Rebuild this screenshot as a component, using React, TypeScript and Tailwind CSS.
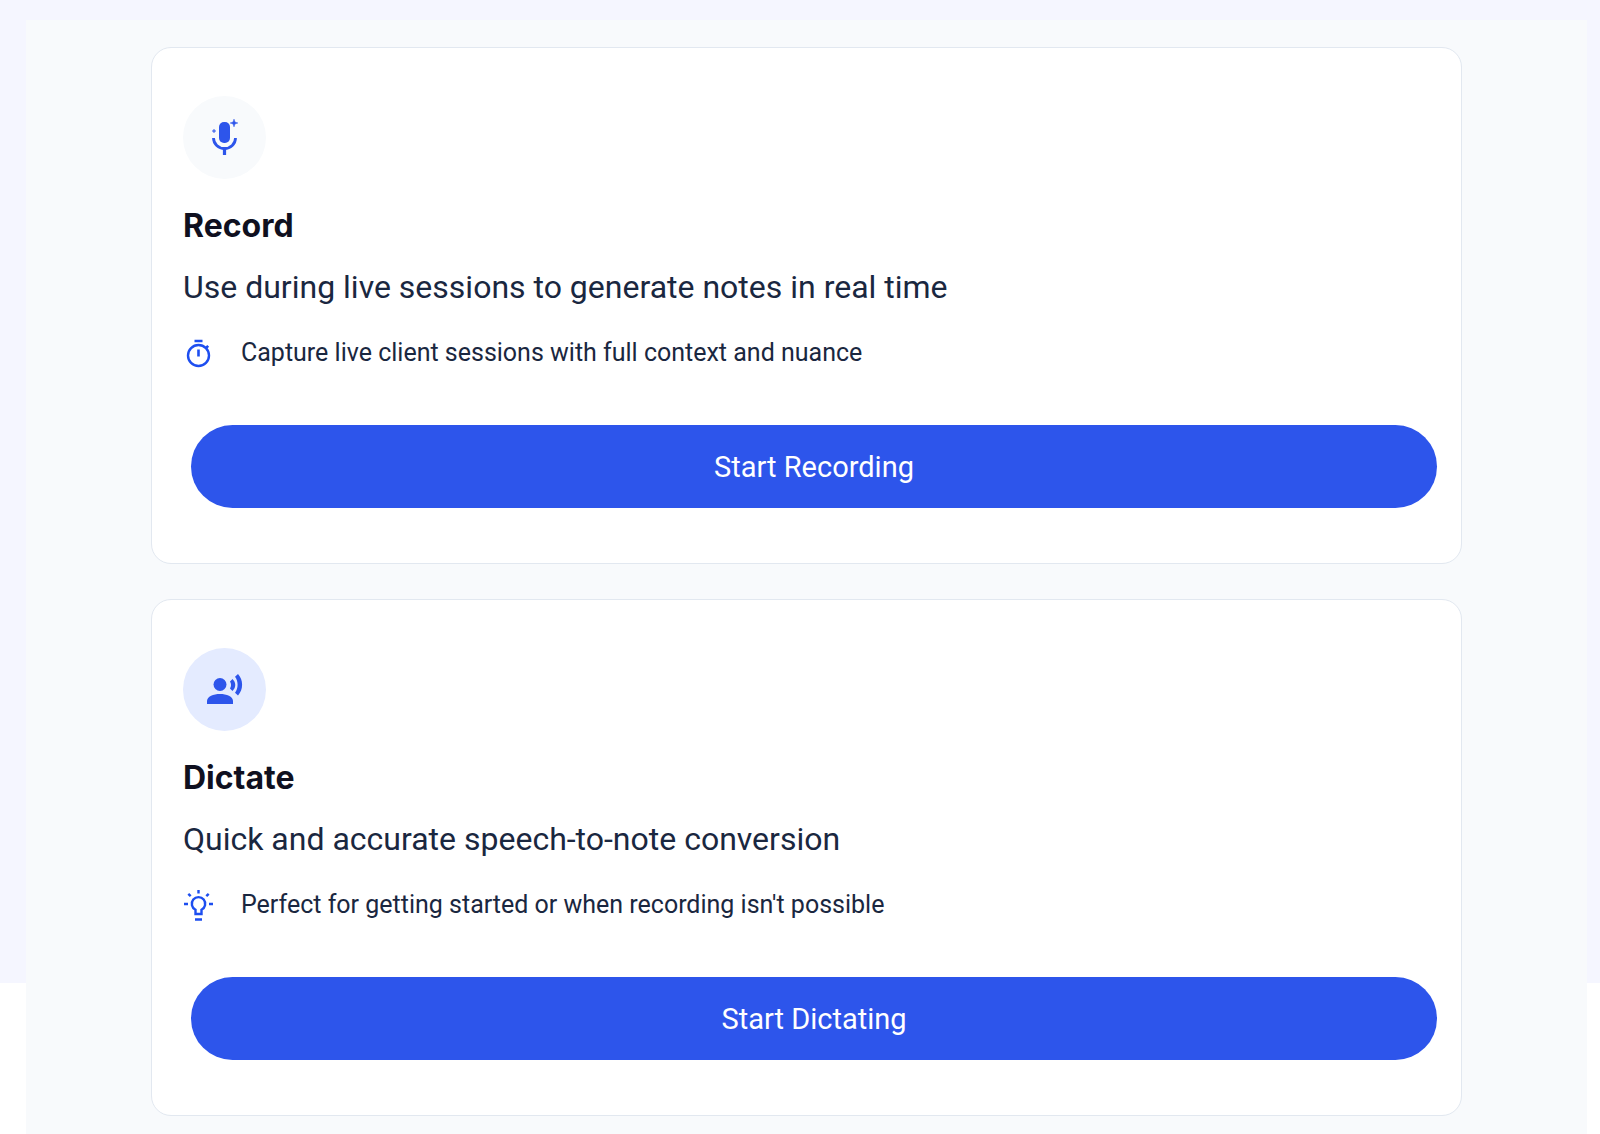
import type { ReactNode } from "react";

interface ModeCardProps {
  title: string;
  subtitle: string;
  feature: string;
  action: string;
  icon: ReactNode;
  featureIcon: ReactNode;
  iconBg: string;
}

const MicIcon = () => (
  <svg width="40" height="40" viewBox="0 0 40 40" fill="#2d55eb" aria-hidden="true">
    <rect x="14" y="4" width="11" height="21" rx="5" />
    <path d="M8.500 20a11 10.5 0 0 0 22 0" fill="none" stroke="#2d55eb" strokeWidth="2.8" />
    <rect x="17.9" y="30" width="3.2" height="7" />
    <path d="M29 1l1 3 3 1-3 1-1 3-1-3-3-1 3-1z" stroke="#2d55eb" strokeWidth="0.4" />
    <path d="M9 11l.5 1.500 1.500.5-1.500.5-.5 1.500-.5-1.500-1.500-.5 1.500-.5z" stroke="#2d55eb" strokeWidth="0.4" />
  </svg>
);

const VoiceIcon = () => (
  <svg width="40" height="40" viewBox="0 0 40 40" fill="#2d55eb" aria-hidden="true">
    <circle cx="15" cy="14.5" r="6.5" />
    <path d="M2 34v-3c0-4.500 6.500-7 13-7s13 2.500 13 7v3z" />
    <path d="M27.500 9c3.700 3.500 3.700 8.500 0 12l-2.500-2.500c1.400-2.500 1.400-4.500 0-7z" />
    <path d="M33 4c5.500 6 5.500 15.500 0 21.500l-3-2.700c3.500-4.600 3.500-11.500 0-16.100z" />
  </svg>
);

const TimerIcon = () => (
  <svg width="30" height="30" viewBox="0 0 30 30" fill="none" stroke="#1d4ef0" strokeWidth="2.4" aria-hidden="true">
    <circle cx="15.5" cy="17.5" r="10.5" />
    <path d="M11.500 3h8M15.500 11.500v7M23 10l2.200-2.200" strokeWidth="2.6" />
  </svg>
);

const BulbIcon = () => (
  <svg width="30" height="32" viewBox="0 0 30 32" fill="none" stroke="#1d4ef0" strokeWidth="2.4" aria-hidden="true">
    <path d="M12.500 25v-4.200a6.700 6.700 0 1 1 6 0V25z" />
    <path d="M12 30.500h7M15.500 1v3.500M1 15h4M26 15h4M5.300 4.800l2.400 2.400M25.700 4.800l-2.400 2.400" />
  </svg>
);

const ModeCard = ({ title, subtitle, feature, action, icon, featureIcon, iconBg }: ModeCardProps) => (
  <section className="rounded-[20px] border border-[#e2e8f0] bg-white pt-12 pr-6 pb-[55px] pl-[31px]">
    <div className={`flex size-[83px] items-center justify-center rounded-full ${iconBg}`}>{icon}</div>
    <h2 className="mt-[27px] font-['Inter',sans-serif] text-[32px] leading-10 font-bold text-[#0f1020]">{title}</h2>
    <p className="mt-[21px] text-[32px] leading-10 text-[#1a2740]">{subtitle}</p>
    <div className="mt-7 flex h-9 items-center gap-7 text-[25px] text-[#1a2740]">
      <span className="flex w-[30px] shrink-0 justify-center">{featureIcon}</span>
      <span>{feature}</span>
    </div>
    <div className="mt-[54px] pl-2">
      <button type="button" className="h-[83px] w-full rounded-full bg-[#2d55eb] pt-0.5 text-[29px] text-white">
        {action}
      </button>
    </div>
  </section>
);

const App = () => {
  return (
    <div className="bg-[linear-gradient(#f5f6ff,#f5f6ff)] bg-[length:100%_983px] bg-no-repeat pt-5 pr-[13px] pl-[26px] font-['Roboto',sans-serif]">
      <main className="flex min-h-screen flex-col gap-[35px] bg-[#f8fafc] pt-[27px] pr-[125px] pb-[19px] pl-[125px]">
        <ModeCard
          title="Record"
          subtitle="Use during live sessions to generate notes in real time"
          feature="Capture live client sessions with full context and nuance"
          action="Start Recording"
          icon={<MicIcon />}
          featureIcon={<TimerIcon />}
          iconBg="bg-[#f8fafc]"
        />
        <ModeCard
          title="Dictate"
          subtitle="Quick and accurate speech-to-note conversion"
          feature="Perfect for getting started or when recording isn't possible"
          action="Start Dictating"
          icon={<VoiceIcon />}
          featureIcon={<BulbIcon />}
          iconBg="bg-[#e4ebff]"
        />
      </main>
    </div>
  );
};

export default App;
